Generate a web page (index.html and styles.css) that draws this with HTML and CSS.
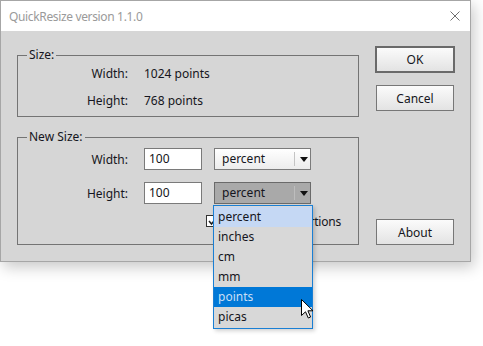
FILE: index.html
```html
<!DOCTYPE html>
<html>
<head>
<meta charset="utf-8">
<link rel="stylesheet" href="styles.css">
</head>
<body>
<div class="window">
  <div class="titlebar">
    <span class="title">QuickResize version 1.1.0</span>
    <svg class="close" width="10" height="10" viewBox="0 0 10 10"><path d="M0.5 0.5 L9.5 9.5 M9.5 0.5 L0.5 9.5" stroke="#6f6f6f" stroke-width="1" fill="none"/></svg>
  </div>
  <div class="content">
    <div class="groups">
      <div class="group size">
        <span class="legend">Size:</span>
        <div class="info">
          <span class="lbl">Width:</span><span class="val">1024 points</span>
          <span class="lbl">Height:</span><span class="val">768 points</span>
        </div>
      </div>
      <div class="group newsize">
        <span class="legend">New Size:</span>
        <div class="row">
          <span class="lbl">Width:</span>
          <div class="input">100</div>
          <div class="select"><span class="sel-text">percent</span><span class="sep"></span><span class="arrow"></span></div>
        </div>
        <div class="row">
          <span class="lbl">Height:</span>
          <div class="input">100</div>
          <div class="select active"><span class="sel-text">percent</span><span class="sep"></span><span class="arrow"></span>
            <div class="list">
              <div class="item hover">percent</div>
              <div class="item">inches</div>
              <div class="item">cm</div>
              <div class="item">mm</div>
              <div class="item selected">points</div>
              <div class="item">picas</div>
              <svg class="cursor" width="13" height="20" viewBox="0 0 13 20"><path d="M0.5 0.5 L0.5 16.5 L4.5 12.8 L7.3 19 L9.6 18 L6.9 11.8 L12 11.8 Z" fill="#fff" stroke="#000" stroke-width="1" stroke-linejoin="miter"/></svg>
            </div>
          </div>
        </div>
        <div class="check-row"><span class="checkbox"><svg width="9" height="9" viewBox="0 0 9 9"><path d="M1 4 L3.5 7 L8 1.5" stroke="#222" stroke-width="1.5" fill="none"/></svg></span><span class="check-label">Constrain proportions</span></div>
      </div>
    </div>
    <div class="buttons">
      <div class="btn default">OK</div>
      <div class="btn cancel">Cancel</div>
      <div class="btn about">About</div>
    </div>
  </div>
</div>
</body>
</html>
```

FILE: styles.css
```css
* { box-sizing: border-box; }
html, body { margin: 0; padding: 0; background: #ffffff; }
html { height: 346px; }
body {
  min-height: 346px;
  font-family: "Noto Sans", "Open Sans", sans-serif;
  font-size: 12px;
  color: #151520;
}
.window {
  width: 471px;
  height: 262px;
  border: 1px solid #a6a6a6;
  background: #d6d6d6;
  box-shadow: 3px 5px 14px rgba(0, 0, 0, 0.22);
  display: flex;
  flex-direction: column;
}
.titlebar {
  height: 30px;
  background: #ffffff;
  display: flex;
  align-items: center;
  justify-content: space-between;
  padding: 0 10px 0 8px;
}
.title {
  color: #9a9a9a;
  font-size: 12px;
  letter-spacing: -0.35px;
  margin-top: 1px;
}
.close { display: block; margin-top: -1px; }
.content {
  display: flex;
  padding-left: 16px;
  flex: 1;
}
.groups {
  width: 342px;
  padding-top: 24px;
  display: flex;
  flex-direction: column;
  gap: 20px;
}
.group {
  position: relative;
  border: 1px solid #747474;
}
.legend {
  position: absolute;
  top: -9px;
  left: 9px;
  padding: 0 2px;
  line-height: 16px;
  background: #d6d6d6;
}
.size { height: 62px; padding-top: 4px; }
.info {
  display: grid;
  grid-template-columns: 110px auto;
  grid-auto-rows: 27px;
  column-gap: 16px;
  align-items: center;
}
.lbl { text-align: right; }
.newsize { height: 108px; padding-top: 10px; }
.row {
  display: flex;
  align-items: center;
  height: 22px;
  margin-bottom: 12px;
}
.row .lbl { width: 110px; }
.input {
  margin-left: 16px;
  width: 58px;
  height: 22px;
  background: #ffffff;
  border: 1px solid #7a7a7a;
  padding-left: 4px;
  line-height: 20px;
}
.select {
  position: relative;
  margin-left: 12px;
  width: 97px;
  height: 22px;
  border: 1px solid #7b7b7b;
  background: linear-gradient(#ffffff, #ececec);
  display: flex;
  align-items: center;
}
.sel-text { width: 79px; padding-left: 7px; line-height: 20px; }
.sep { width: 1px; height: 14px; background: #c4c4c4; }
.arrow {
  margin-left: 5px;
  width: 0;
  height: 0;
  border-left: 4px solid transparent;
  border-right: 4px solid transparent;
  border-top: 5px solid #111;
}
.select.active {
  background: #a9a9a9;
  border-color: #6a6a6a;
}
.select.active .sep { background: #bdbdbd; }
.list {
  position: absolute;
  top: 22px;
  left: -2px;
  width: 100px;
  border: 1px solid #1a7fd4;
  padding: 1px 0;
  background: #d8d8d8;
  box-shadow: 2px 2px 4px rgba(0, 0, 0, 0.18);
  z-index: 2;
}
.item {
  height: 20px;
  line-height: 20px;
  padding-left: 4px;
}
.item.hover { background: #c5d8f4; }
.item.selected { background: #0078d7; color: #c9dff5; }
.cursor {
  position: absolute;
  left: 87px;
  top: 93px;
}
.check-row {
  margin-top: -2px;
  padding-left: 188px;
  display: flex;
  align-items: center;
  gap: 3px;
  height: 14px;
}
.check-label { letter-spacing: -0.2px; }
.checkbox {
  width: 12px;
  height: 12px;
  border: 1px solid #333;
  background: #fff;
  display: flex;
  align-items: center;
  justify-content: center;
}
.buttons {
  margin-left: 17px;
  padding-top: 15px;
  display: flex;
  flex-direction: column;
}
.btn {
  width: 78px;
  height: 26px;
  border: 1px solid #777;
  background: linear-gradient(#fbfbfb, #e3e3e3);
  display: flex;
  align-items: center;
  justify-content: center;
}
.btn.default {
  width: 80px;
  height: 27px;
  margin-left: -1px;
  border: 2px solid #6a6a6a;
}
.btn.cancel { margin-top: 12px; }
.btn.about { margin-top: 108px; }
```
